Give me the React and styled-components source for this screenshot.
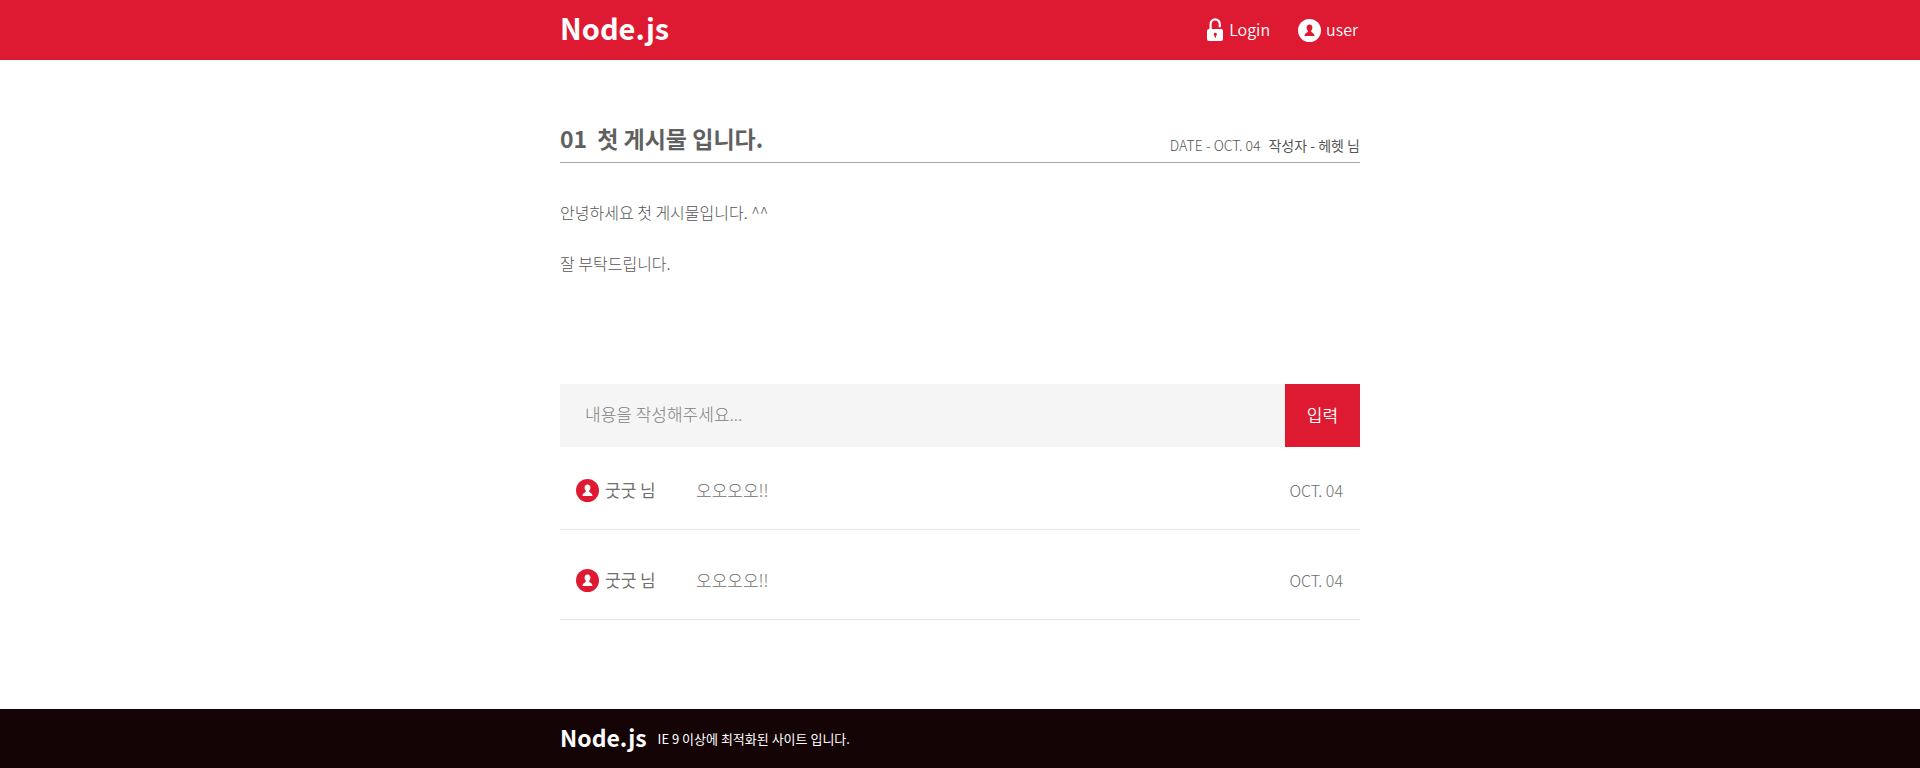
import React from "react";
import styled, { createGlobalStyle } from "styled-components";

const GlobalStyle = createGlobalStyle`
  *, *::before, *::after { box-sizing: border-box; }
  body {
    margin: 0;
    background: #fff;
    color: #555;
    font-family: "Noto Sans CJK KR", "Noto Sans", sans-serif;
    font-size: 16px;
    font-weight: 300;
  }
  h1, p, ul { margin: 0; padding: 0; }
  a { color: inherit; text-decoration: none; }
`;

const Page = styled.div`
  min-height: 100vh;
  display: flex;
  flex-direction: column;
`;

const Container = styled.div`
  width: 100%;
  max-width: 800px;
  margin: 0 auto;
`;

const Header = styled.header`
  background: #dd1a31;
  color: #fff;
`;

const HeaderInner = styled(Container)`
  display: flex;
  align-items: center;
  justify-content: space-between;
  height: 60px;
`;

const Logo = styled.a`
  padding-bottom: ${(p) => (p.$small ? "4px" : "6px")};
  font-size: ${(p) => (p.$small ? "23px" : "29px")};
  line-height: ${(p) => (p.$small ? "32px" : "48px")};
  font-weight: 700;
`;

const Menu = styled.nav`
  display: flex;
  gap: 28px;
  padding-right: 2px;
`;

const MenuLink = styled.a`
  display: flex;
  align-items: center;
  gap: 5px;
  font-size: 16px;
  line-height: 24px;
  font-weight: 350;
`;

const MenuLabel = styled.span`
  padding-bottom: 2px;
`;

const Main = styled(Container).attrs({ as: "main" })`
  flex: 1;
  padding: 60px 0 88px;
`;

const PostHead = styled.div`
  display: flex;
  justify-content: space-between;
  align-items: flex-end;
  height: 43px;
  border-bottom: 1px solid #aaa;
`;

const Title = styled.h1`
  display: flex;
  gap: 10px;
  color: #606060;
  font-size: 23px;
  line-height: 48px;
  font-weight: 700;
`;

const Meta = styled.p`
  display: flex;
  gap: 8px;
  font-size: 14px;
  line-height: 34px;
`;

const PostBody = styled.div`
  padding: 36px 0 108px;
  font-size: 16px;
  line-height: 26px;
  p + p { margin-top: 25px; }
`;

const CommentForm = styled.form`
  display: flex;
  height: 63px;
`;

const CommentInput = styled.input`
  flex: 1;
  min-width: 0;
  padding: 0 25px 4px;
  border: 0;
  background: #f5f5f5;
  color: #555;
  font: inherit;
  font-size: 17px;
  &::placeholder { color: #808080; opacity: 1; }
`;

const SubmitButton = styled.button`
  width: 75px;
  padding: 0 0 2px;
  border: 0;
  background: #dd1a31;
  color: #fff;
  font: inherit;
  font-size: 17px;
  font-weight: 350;
`;

const CommentList = styled.ul`
  list-style: none;
`;

const Comment = styled.li`
  display: flex;
  align-items: center;
  padding: 30px 17px 25px 16px;
  border-bottom: 1px solid #e5e5e5;
  color: #707070;
  line-height: 25px;
  & + & { padding-top: 37px; }
`;

const Author = styled.span`
  display: flex;
  align-items: center;
  gap: 6px;
  width: 120px;
  font-size: 17px;
  font-weight: 400;
`;

const AuthorName = styled.span`
  padding-bottom: 2px;
`;

const CommentText = styled.p`
  flex: 1;
  padding-bottom: 2px;
  font-size: 17px;
`;

const CommentDate = styled.time`
  font-size: 16px;
`;

const Footer = styled.footer`
  background: #150406;
  color: #fff;
`;

const FooterInner = styled(Container)`
  display: flex;
  align-items: center;
  gap: 11px;
  height: 59px;
`;

const Notice = styled.p`
  font-size: 13px;
  font-weight: 400;
`;

const LockIcon = () => (
  <svg width="17" height="24" viewBox="0 0 17 24" aria-hidden="true">
    <path d="M3.600 12V6a4.600 4.600 0 0 1 9.200 0v3.200" fill="none" stroke="#fff" strokeWidth="2.200" />
    <path fillRule="evenodd" fill="#fff" d="M2 11h12a2 2 0 0 1 2 2v8a2 2 0 0 1-2 2H2a2 2 0 0 1-2-2v-8a2 2 0 0 1 2-2ZM8.300 14.700a1.600 1.600 0 0 0-.8 3v1.800h1.600v-1.800a1.600 1.600 0 0 0-.8-3Z" />
  </svg>
);

const UserIcon = ({ disc, person }) => (
  <svg width="23" height="23" viewBox="0 0 23 23" aria-hidden="true">
    <circle cx="11.500" cy="11.500" r="11.500" fill={disc} />
    <path fill={person} d="M11.500 5.500c2 0 3 1.300 2.900 3.200-.1 1.400-.6 2.300-1.200 2.900v1.100c.3.900 3.100 1 3.300 4.300h-10c.2-3.300 3-3.400 3.300-4.300v-1.100c-.6-.6-1.100-1.500-1.200-2.900-.1-1.900.9-3.200 2.900-3.200Z" />
  </svg>
);

const comments = [
  { id: 1, author: "굿굿 님", text: "오오오오!!", date: "OCT. 04" },
  { id: 2, author: "굿굿 님", text: "오오오오!!", date: "OCT. 04" },
];

export default function App() {
  return (
    <Page>
      <GlobalStyle />
      <Header>
        <HeaderInner>
          <Logo href="#">Node.js</Logo>
          <Menu>
            <MenuLink href="#login"><LockIcon /><MenuLabel>Login</MenuLabel></MenuLink>
            <MenuLink href="#user"><UserIcon disc="#fff" person="#dd1a31" /><MenuLabel>user</MenuLabel></MenuLink>
          </Menu>
        </HeaderInner>
      </Header>
      <Main>
        <PostHead>
          <Title><span>01</span><span>첫 게시물 입니다.</span></Title>
          <Meta><span>DATE - OCT. 04</span><b>작성자 - 헤헷 님</b></Meta>
        </PostHead>
        <PostBody>
          <p>안녕하세요 첫 게시물입니다. ^^</p>
          <p>잘 부탁드립니다.</p>
        </PostBody>
        <CommentForm onSubmit={(e) => e.preventDefault()}>
          <CommentInput aria-label="댓글 내용" placeholder="내용을 작성해주세요..." />
          <SubmitButton type="submit">입력</SubmitButton>
        </CommentForm>
        <CommentList>
          {comments.map((c) => (
            <Comment key={c.id}>
              <Author><UserIcon disc="#dd1a31" person="#fff" /><AuthorName>{c.author}</AuthorName></Author>
              <CommentText>{c.text}</CommentText>
              <CommentDate>{c.date}</CommentDate>
            </Comment>
          ))}
        </CommentList>
      </Main>
      <Footer>
        <FooterInner>
          <Logo href="#" $small>Node.js</Logo>
          <Notice>IE 9 이상에 최적화된 사이트 입니다.</Notice>
        </FooterInner>
      </Footer>
    </Page>
  );
}
